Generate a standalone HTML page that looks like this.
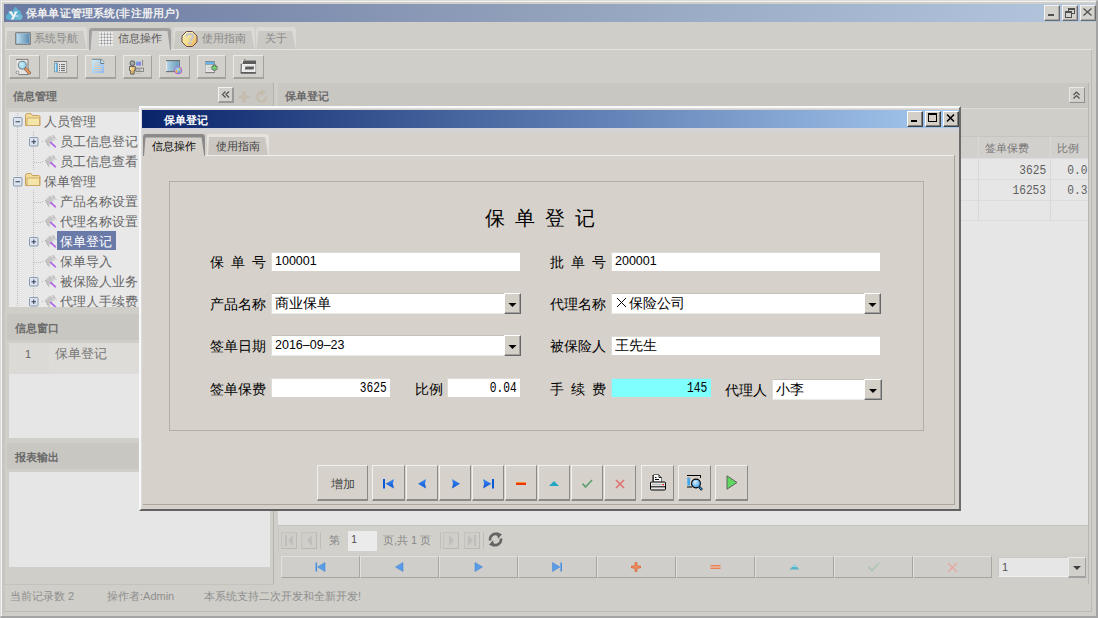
<!DOCTYPE html>
<html><head><meta charset="utf-8">
<style>
*{margin:0;padding:0;box-sizing:border-box}
html,body{width:1098px;height:618px;overflow:hidden}
body{position:relative;background:#d0cec9;font-family:"Liberation Sans",sans-serif;font-size:12px;color:#666}
.a{position:absolute;display:block}
.t{position:absolute;white-space:nowrap;line-height:1}
.lbl{position:absolute;white-space:nowrap;line-height:1;font-size:14px;color:#000}
.mono{font-family:"Liberation Mono",monospace}
</style></head><body>

<div class="a" style="left:0px;top:0px;width:1098px;height:618px;border-top:1px solid #dcdcdc;border-left:1px solid #dcdcdc;border-right:2px solid #a4a4a4;border-bottom:2px solid #a4a4a4"></div>
<div class="a" style="left:1px;top:1px;width:1095px;height:1px;background:#f2f2f2"></div>
<div class="a" style="left:1px;top:1px;width:1px;height:615px;background:#f2f2f2"></div>
<div class="a" style="left:2px;top:22px;width:3px;height:592px;background:#c8c6c0"></div>
<div class="a" style="left:4px;top:4px;width:1092px;height:18px;background:linear-gradient(to right,#6b7aa2,#92a2bc 50%,#b4c7df)"></div>
<svg class="a" style="left:5px;top:6px" width="18" height="15" viewBox="0 0 18 15"><path d="M3.5 13.8 C0.2 13.8 0 8.5 3 8 C3 5 6 4 8 5.2 C8.5 2.5 10 1 10.6 1 C11.5 1 12.5 2.5 12.8 4 C15.5 3.8 16.5 6.5 16 8.2 C18 9 18 13.8 15 13.8 Z" fill="#5eb0d2"/><path d="M9 13.8 C12 12 14 9 16.5 8.6 C18 9.5 17.8 13.8 15 13.8 Z" fill="#80c0d8" opacity="0.6"/><path d="M3.6 5.6 H7 L8.4 9.2 L9.8 5.6 H12.8 L10.2 9.6 H13.6 L13.4 10.4 H10 L8.6 13.4 H5.6 L7.6 10.8 Z" fill="#f4f4f4"/></svg>
<div class="t" style="left:26px;top:8px;font-size:11px;letter-spacing:0.2px;font-weight:bold;color:#eeeeee">保单单证管理系统(非注册用户)</div>
<div class="a" style="left:1044px;top:5px;width:16px;height:16px;background:#d4d2cc;border-top:1px solid #f4f4f4;border-left:1px solid #f4f4f4;border-right:1px solid #6c6c6c;border-bottom:1px solid #6c6c6c;box-shadow:inset -1px -1px 0 #a8a8a8"></div>
<div class="a" style="left:1062px;top:5px;width:16px;height:16px;background:#d4d2cc;border-top:1px solid #f4f4f4;border-left:1px solid #f4f4f4;border-right:1px solid #6c6c6c;border-bottom:1px solid #6c6c6c;box-shadow:inset -1px -1px 0 #a8a8a8"></div>
<div class="a" style="left:1080px;top:5px;width:16px;height:16px;background:#d4d2cc;border-top:1px solid #f4f4f4;border-left:1px solid #f4f4f4;border-right:1px solid #6c6c6c;border-bottom:1px solid #6c6c6c;box-shadow:inset -1px -1px 0 #a8a8a8"></div>
<svg class="a" style="left:1044px;top:5px" width="16" height="16" viewBox="0 0 16 16"><rect x="4" y="9" width="6" height="2" fill="#505050"/></svg>
<svg class="a" style="left:1062px;top:5px" width="16" height="16" viewBox="0 0 16 16"><g fill="#505050"><rect x="6" y="3" width="7" height="2"/><rect x="12" y="5" width="1" height="4"/><rect x="10" y="8" width="3" height="1"/><rect x="6" y="5" width="1" height="1"/><rect x="3" y="6" width="7" height="2"/><rect x="3" y="8" width="1" height="5"/><rect x="9" y="8" width="1" height="5"/><rect x="3" y="12" width="7" height="1"/></g></svg>
<svg class="a" style="left:1080px;top:5px" width="16" height="16" viewBox="0 0 16 16"><path d="M3.5 3.5 L11.5 10.5 M11.5 3.5 L3.5 10.5" stroke="#505050" stroke-width="1.3"/></svg>
<div class="a" style="left:5px;top:27px;width:82px;height:23px;background:#dcdad6;border-radius:3px 3px 0 0"></div>
<div class="a" style="left:5px;top:31px;width:82px;height:18px;background:#cbc9c4;clip-path:polygon(2.5px 0,78px 0,81.5px 18px,0.5px 18px)"></div>
<div class="t" style="left:34px;top:33px;font-size:11px;color:#8a8a8a">系统导航</div>
<div class="a" style="left:173px;top:27px;width:82px;height:23px;background:#dcdad6;border-radius:3px 3px 0 0"></div>
<div class="a" style="left:173px;top:31px;width:82px;height:18px;background:#cbc9c4;clip-path:polygon(2.5px 0,78px 0,81.5px 18px,0.5px 18px)"></div>
<div class="t" style="left:202px;top:33px;font-size:11px;color:#8a8a8a">使用指南</div>
<div class="a" style="left:256px;top:27px;width:40px;height:23px;background:#dcdad6;border-radius:3px 3px 0 0"></div>
<div class="a" style="left:256px;top:31px;width:40px;height:18px;background:#cbc9c4;clip-path:polygon(2.5px 0,36px 0,39.5px 18px,0.5px 18px)"></div>
<div class="t" style="left:265px;top:33px;font-size:11px;color:#8a8a8a">关于</div>
<div class="a" style="left:89px;top:28px;width:82px;height:22px;background:#d4d2ce"></div>
<svg class="a" style="left:89px;top:28px" width="82" height="22" viewBox="0 0 82 22"><path d="M0 22 L0 3 Q0 0 3 0 L79 0 Q82 0 82 3 L82 22 L81 22 L78.5 3 L3 3 L1.5 22 Z" fill="#a0a0a0"/></svg>
<div class="t" style="left:118px;top:33px;font-size:11px;color:#555">信息操作</div>
<svg class="a" style="left:15px;top:32px" width="16" height="13" viewBox="0 0 16 13"><defs><linearGradient id="g1" x1="0" x2="1"><stop offset="0" stop-color="#bfe0f0"/><stop offset="1" stop-color="#5a8ab0"/></linearGradient></defs><rect x="0.5" y="0.5" width="15" height="12" fill="#404040"/><rect x="1.5" y="1.5" width="13" height="10" fill="url(#g1)" stroke="#b0d8f0" stroke-width="0.6"/></svg>
<svg class="a" style="left:99px;top:32px" width="14" height="14" viewBox="0 0 14 14"><rect x="0" y="0" width="14" height="14" fill="#eeeeee"/><rect x="2.0" y="0" width="1" height="14" fill="#c8c8c8"/><rect x="5.0" y="0" width="1" height="14" fill="#c8c8c8"/><rect x="8.0" y="0" width="1" height="14" fill="#c8c8c8"/><rect x="11.0" y="0" width="1" height="14" fill="#c8c8c8"/><rect x="0" y="1.7999999999999998" width="14" height="1" fill="#c8c8c8"/><rect x="0" y="4.9" width="14" height="1" fill="#c8c8c8"/><rect x="0" y="8.0" width="14" height="1" fill="#c8c8c8"/><rect x="0" y="10.9" width="14" height="1" fill="#c8c8c8"/><rect x="1.9" y="1.6999999999999997" width="1.2" height="1.2" fill="#8c8c8c"/><rect x="1.9" y="4.800000000000001" width="1.2" height="1.2" fill="#8c8c8c"/><rect x="1.9" y="7.9" width="1.2" height="1.2" fill="#8c8c8c"/><rect x="1.9" y="10.8" width="1.2" height="1.2" fill="#8c8c8c"/><rect x="4.9" y="1.6999999999999997" width="1.2" height="1.2" fill="#8c8c8c"/><rect x="4.9" y="4.800000000000001" width="1.2" height="1.2" fill="#8c8c8c"/><rect x="4.9" y="7.9" width="1.2" height="1.2" fill="#8c8c8c"/><rect x="4.9" y="10.8" width="1.2" height="1.2" fill="#8c8c8c"/><rect x="7.9" y="1.6999999999999997" width="1.2" height="1.2" fill="#8c8c8c"/><rect x="7.9" y="4.800000000000001" width="1.2" height="1.2" fill="#8c8c8c"/><rect x="7.9" y="7.9" width="1.2" height="1.2" fill="#8c8c8c"/><rect x="7.9" y="10.8" width="1.2" height="1.2" fill="#8c8c8c"/><rect x="10.9" y="1.6999999999999997" width="1.2" height="1.2" fill="#8c8c8c"/><rect x="10.9" y="4.800000000000001" width="1.2" height="1.2" fill="#8c8c8c"/><rect x="10.9" y="7.9" width="1.2" height="1.2" fill="#8c8c8c"/><rect x="10.9" y="10.8" width="1.2" height="1.2" fill="#8c8c8c"/></svg>
<svg class="a" style="left:181px;top:30px" width="18" height="18" viewBox="0 0 18 18"><defs><linearGradient id="oct" x1="0" y1="0" x2="1" y2="1"><stop offset="0" stop-color="#fbf6c8"/><stop offset="0.55" stop-color="#f2dc88"/><stop offset="1" stop-color="#eca850"/></linearGradient></defs><polygon points="5.5,1.5 11.5,1.5 16,6 16,12 11.5,16.5 5.5,16.5 1,12 1,6" fill="url(#oct)" stroke="#6a4a4a" stroke-width="1"/><path d="M5.5 6.5 Q5.5 4 8.5 4 Q12 4 12 6.5 Q12 8.5 9.8 9 V11" fill="none" stroke="#c4c4cc" stroke-width="2.2"/><rect x="7.5" y="12.2" width="3" height="2.2" fill="#c4c4cc"/></svg>
<div class="a" style="left:5px;top:49px;width:84px;height:1px;background:#e6e4e0"></div>
<div class="a" style="left:171px;top:49px;width:921px;height:1px;background:#e6e4e0"></div>
<div class="a" style="left:1091px;top:50px;width:1px;height:562px;background:#bcbab4"></div>
<div class="a" style="left:9px;top:55px;width:31px;height:24px;background:#d2d0cb;border-top:1px solid #eceae6;border-left:1px solid #eceae6;border-right:1px solid #a4a29c;border-bottom:2px solid #a4a29c;"></div>
<div class="a" style="left:47px;top:55px;width:31px;height:24px;background:#d2d0cb;border-top:1px solid #eceae6;border-left:1px solid #eceae6;border-right:1px solid #a4a29c;border-bottom:2px solid #a4a29c;"></div>
<div class="a" style="left:85px;top:55px;width:31px;height:24px;background:#d2d0cb;border-top:1px solid #eceae6;border-left:1px solid #eceae6;border-right:1px solid #a4a29c;border-bottom:2px solid #a4a29c;"></div>
<div class="a" style="left:123px;top:55px;width:29px;height:24px;background:#d2d0cb;border-top:1px solid #eceae6;border-left:1px solid #eceae6;border-right:1px solid #a4a29c;border-bottom:2px solid #a4a29c;"></div>
<div class="a" style="left:159px;top:55px;width:31px;height:24px;background:#d2d0cb;border-top:1px solid #eceae6;border-left:1px solid #eceae6;border-right:1px solid #a4a29c;border-bottom:2px solid #a4a29c;"></div>
<div class="a" style="left:197px;top:55px;width:29px;height:24px;background:#d2d0cb;border-top:1px solid #eceae6;border-left:1px solid #eceae6;border-right:1px solid #a4a29c;border-bottom:2px solid #a4a29c;"></div>
<div class="a" style="left:233px;top:55px;width:31px;height:24px;background:#d2d0cb;border-top:1px solid #eceae6;border-left:1px solid #eceae6;border-right:1px solid #a4a29c;border-bottom:2px solid #a4a29c;"></div>
<svg class="a" style="left:12px;top:56px" width="24" height="22" viewBox="0 0 24 22"><rect x="4.5" y="3.5" width="11.5" height="15" fill="#e4e4e2"/><path d="M4 3.4 H16 V18.6 H6.5" fill="none" stroke="#727272" stroke-width="0.9"/><circle cx="5.5" cy="16.3" r="1.3" fill="#fafafa" stroke="#727272" stroke-width="0.8"/><defs><radialGradient id="lg1" cx="0.4" cy="0.4" r="0.7"><stop offset="0" stop-color="#c8f0f4"/><stop offset="1" stop-color="#88c8f0"/></radialGradient></defs><circle cx="10.3" cy="9.3" r="4" fill="url(#lg1)" stroke="#6e6e6e" stroke-width="0.9"/><path d="M13.6 12.8 L17.4 16.9" stroke="#606060" stroke-width="3.2" stroke-linecap="round"/><path d="M13.6 12.8 L17.4 16.9" stroke="#f08a50" stroke-width="2.2" stroke-linecap="round"/><path d="M14.2 13.6 L16.6 16.2" stroke="#f8d080" stroke-width="0.7" stroke-dasharray="0.8 0.8"/></svg>
<svg class="a" style="left:50px;top:56px" width="24" height="22" viewBox="0 0 24 22"><rect x="4.3" y="5.5" width="12.5" height="11" fill="#e6e6e6"/><rect x="4" y="5" width="13" height="0.9" fill="#6e6e6e"/><rect x="16.3" y="5" width="0.8" height="11.6" fill="#8a8a8a"/><rect x="7.8" y="16" width="9.3" height="0.7" fill="#8a8a8a"/><rect x="4.3" y="7" width="3.4" height="9" fill="#60b8ec" stroke="#8a8a8a" stroke-width="0.6"/><rect x="5" y="7.6" width="1" height="7.8" fill="#b8e4f8"/><g fill="#5c5c5c"><rect x="9" y="8.1" width="1" height="1"/><rect x="11" y="8.2" width="4" height="0.9"/><rect x="9" y="10.1" width="1" height="1"/><rect x="11" y="10.2" width="4" height="0.9"/><rect x="9" y="12.1" width="1" height="1"/><rect x="11" y="12.2" width="4" height="0.9"/><rect x="9" y="14.1" width="1" height="1"/><rect x="11" y="14.2" width="4" height="0.9"/></g></svg>
<svg class="a" style="left:88px;top:56px" width="24" height="22" viewBox="0 0 24 22"><defs><linearGradient id="dg3" x1="0" y1="0" x2="1" y2="1"><stop offset="0" stop-color="#c8eef8"/><stop offset="1" stop-color="#90b8f0"/></linearGradient></defs><path d="M4 3.3 H13.7 L16 5.8 V17 H4 Z" fill="url(#dg3)"/><path d="M4 3.3 H13.6" stroke="#767676" stroke-width="0.9"/><path d="M13.6 3.3 L16.2 6" stroke="#808080" stroke-width="0.8"/><path d="M12.8 3.5 V7.4 H16.2" fill="none" stroke="#6e6e6e" stroke-width="1"/><path d="M13.4 4 L15.8 6.8 H13.4 Z" fill="#d0f4fa"/><g fill="#e2cdb4"><rect x="6" y="6" width="4.8" height="0.9"/><rect x="6" y="8" width="4.8" height="0.9"/><rect x="6" y="10.1" width="7.8" height="0.9"/><rect x="6" y="12.1" width="7.8" height="0.9"/><rect x="6" y="14.1" width="7.8" height="0.9"/></g></svg>
<svg class="a" style="left:125px;top:56px" width="24" height="22" viewBox="0 0 24 22"><rect x="10.5" y="4.2" width="6" height="5.6" fill="#d4d4d4"/><rect x="11" y="5.6" width="5" height="4" fill="#8888e8"/><circle cx="11.6" cy="6.3" r="0.9" fill="#40e0e0"/><rect x="17.2" y="4" width="0.9" height="5.8" fill="#808080"/><rect x="11" y="12.2" width="7.5" height="3.2" fill="#e6e6e6" stroke="#7a7a7a" stroke-width="0.9"/><rect x="12" y="13.6" width="4.5" height="0.8" fill="#6a6a6a"/><rect x="10.5" y="17.3" width="6" height="0.6" fill="#b0b0b0"/><circle cx="7.4" cy="7.2" r="2.4" fill="#a8a8a8" stroke="#505050" stroke-width="0.9"/><path d="M4.6 10.4 H10.2 V14.6 H9.1 V18.1 H5.7 V14.6 H4.6 Z" fill="#f0c878" stroke="#505050" stroke-width="0.9"/><path d="M7.4 14.6 V18" stroke="#c09040" stroke-width="0.6"/><rect x="5.2" y="11" width="1.2" height="3" fill="#fae8c0"/></svg>
<svg class="a" style="left:162px;top:56px" width="24" height="22" viewBox="0 0 24 22"><defs><linearGradient id="mg5" x1="0" x2="1"><stop offset="0" stop-color="#b0d4e8"/><stop offset="1" stop-color="#6a9ab8"/></linearGradient><radialGradient id="gl5" cx="0.4" cy="0.4" r="0.7"><stop offset="0" stop-color="#b0d8f0"/><stop offset="1" stop-color="#5a9ad0"/></radialGradient></defs><rect x="4.2" y="4.6" width="13.4" height="10.8" fill="url(#mg5)"/><rect x="4.2" y="5.2" width="0.9" height="10.2" fill="#f0f0f0"/><rect x="16.6" y="5" width="0.9" height="10.5" fill="#90d0f8"/><rect x="4" y="4.2" width="13.8" height="0.9" fill="#5e5e5e"/><rect x="4" y="15.2" width="13.8" height="0.9" fill="#5e5e5e"/><rect x="17.2" y="4.2" width="0.7" height="11.8" fill="#5e5e5e"/><circle cx="16.2" cy="14.3" r="3.9" fill="#d050d8"/><circle cx="16.2" cy="14.3" r="3.2" fill="url(#gl5)"/><path d="M13.4 15.5 Q14.5 12.5 15.4 14.8 Q15.6 17 14.3 17.2 Z" fill="#f0b040"/><path d="M16.8 11.5 Q19 12 18.6 14.3 Q17.4 14.8 17 13 Z" fill="#e8c840"/><path d="M17.6 15.2 Q19 15.5 18.2 16.8 Z" fill="#80c850"/></svg>
<svg class="a" style="left:199px;top:56px" width="24" height="22" viewBox="0 0 24 22"><rect x="6" y="5" width="9.8" height="11.8" fill="#e4e4e4"/><rect x="6" y="5" width="9.8" height="0.9" fill="#7a7a7a"/><rect x="6" y="5.9" width="9.8" height="2.6" fill="#62b4ea"/><rect x="6" y="8.5" width="9.8" height="0.6" fill="#8a8a8a"/><rect x="6" y="16.2" width="9.8" height="0.9" fill="#6a6a6a"/><rect x="15.2" y="5" width="0.8" height="12" fill="#8a8a8a"/><rect x="6" y="5" width="0.6" height="12" fill="#a0a0a0"/><rect x="8.5" y="11" width="5" height="0.8" fill="#a8c8a8"/><rect x="8.5" y="13" width="5" height="0.8" fill="#c8c8c8"/><path d="M15.5 8.8 V14.6 M12.6 11.7 H18.4" stroke="#5a5a5a" stroke-width="3.4"/><path d="M15.5 9.4 V14 M13.2 11.7 H17.8" stroke="#70d870" stroke-width="2"/></svg>
<svg class="a" style="left:236px;top:56px" width="24" height="22" viewBox="0 0 24 22"><path d="M6 4.5 H20 V17.5 H5 L5.3 8 Z" fill="#f0f0f0"/><path d="M7.4 4.4 H20 V8 H6.4 Z" fill="#5c5c5c"/><path d="M5 8.4 L5.8 7.5" stroke="#707070" stroke-width="0.8"/><rect x="8.4" y="3.2" width="0.9" height="0.9" fill="#404040"/><path d="M5.4 8 L5 17.3" stroke="#707070" stroke-width="1.2"/><path d="M9.4 10.6 H18.2 L17.6 13.4 H8.8 Z" fill="#5c5c5c"/><rect x="5" y="16" width="15" height="1.8" fill="#5c5c5c"/><rect x="19.3" y="8" width="0.8" height="8.5" fill="#9a9a9a"/><path d="M7 9.5 H19 M7 14.8 H19" stroke="#c8c8c8" stroke-width="0.5" stroke-dasharray="1 1"/></svg>
<div class="a" style="left:6px;top:83px;width:267px;height:25px;background:#c9c7c2"></div>
<div class="t" style="left:13px;top:91px;font-size:11px;font-weight:bold;color:#6a6a6a">信息管理</div>
<div class="a" style="left:273px;top:83px;width:1px;height:501px;background:#b4b2ac"></div>
<div class="a" style="left:218px;top:87px;width:16px;height:16px;background:#d2d0cb;border-top:1px solid #eceae6;border-left:1px solid #eceae6;border-right:1px solid #a4a29c;border-bottom:2px solid #a4a29c;border-bottom-width:2px;border-right-width:2px;border-top-color:#f2f2f0;border-left-color:#f2f2f0;border-right-color:#9a9a9a;border-bottom-color:#9a9a9a"></div>
<svg class="a" style="left:218px;top:87px" width="16" height="16" viewBox="0 0 16 16"><path d="M7.5 4.5 L4.5 7.5 L7.5 10.5 M11 4.5 L8 7.5 L11 10.5" stroke="#505050" fill="none" stroke-width="1.2"/></svg>
<svg class="a" style="left:237px;top:90px" width="14" height="14" viewBox="0 0 14 14"><path d="M7 1.5 V12.5 M1.5 7 H12.5" stroke="#c4bcad" stroke-width="3"/></svg>
<svg class="a" style="left:255px;top:89px" width="14" height="15" viewBox="0 0 14 15"><path d="M11.2 7.6 A4.6 4.6 0 1 1 7.2 3.6" stroke="#c4bcad" stroke-width="2.6" fill="none"/><path d="M6 0 L11.5 3.4 L6 6.8 Z" fill="#c4bcad"/></svg>
<div class="a" style="left:9px;top:112px;width:264px;height:195px;background:#e8e8e8"></div>
<svg class="a" style="left:17px;top:113px" width="1" height="194"><line x1="0.5" y1="0" x2="0.5" y2="194" stroke="#bdbdbd" stroke-dasharray="1 1"/></svg>
<svg class="a" style="left:33px;top:131px" width="1" height="39"><line x1="0.5" y1="0" x2="0.5" y2="39" stroke="#bdbdbd" stroke-dasharray="1 1"/></svg>
<svg class="a" style="left:33px;top:190px" width="1" height="117"><line x1="0.5" y1="0" x2="0.5" y2="117" stroke="#bdbdbd" stroke-dasharray="1 1"/></svg>
<svg class="a" style="left:13px;top:117px" width="10" height="10" viewBox="0 0 10 10"><rect x="0.5" y="0.5" width="8.5" height="8.5" rx="1" fill="#dde3ec" stroke="#8a9ab2" stroke-width="1"/><path d="M2.5 4.75 H7" stroke="#3a4a66" stroke-width="1.1"/></svg>
<svg class="a" style="left:25px;top:113px" width="16" height="14" viewBox="0 0 16 14"><path d="M0.5 2.5 Q0.5 0.5 2.5 0.5 H6 L7.5 2.5 H13.5 Q15 2.5 15 4 V12.5 H0.5 Z" fill="#f0dc98" stroke="#c8a060" stroke-width="1"/><path d="M2 5 H14.5 V12.5 H2 Z" fill="#f4e6a8" stroke="#c8a060" stroke-width="0.8"/></svg>
<div class="t" style="left:44px;top:115px;font-size:13px;color:#666">人员管理</div>
<svg class="a" style="left:29px;top:137px" width="10" height="10" viewBox="0 0 10 10"><rect x="0.5" y="0.5" width="8.5" height="8.5" rx="1" fill="#dde3ec" stroke="#8a9ab2" stroke-width="1"/><path d="M2.5 4.75 H7" stroke="#3a4a66" stroke-width="1.1"/><path d="M4.75 2.5 V7" stroke="#3a4a66" stroke-width="1.1"/></svg>
<svg class="a" style="left:42px;top:134px" width="15" height="15" viewBox="0 0 15 15"><path d="M3 6.5 L7.5 1.5 L10 2.5 L12 1 L13.5 4.5 L10.5 8.5 L6.5 13 Z" fill="#d2d2d2"/><path d="M4 6 L8 2.5 L11 4 L8.5 8 L6 11 Z" fill="#c4c4c4"/><path d="M0.5 7.5 L1 7.5 M3.5 6.5 L7 12.5 M11 1.5 L14 5.5" stroke="#8a8a8a" stroke-width="1" stroke-dasharray="1 1.2" fill="none"/><path d="M8.8 8.6 L13.4 12.8" stroke="#b060e8" stroke-width="1.6" stroke-linecap="round"/></svg>
<div class="t" style="left:60px;top:135px;font-size:13px;color:#666">员工信息登记</div>
<svg class="a" style="left:34px;top:162px" width="7" height="1"><line x1="0" y1="0.5" x2="7" y2="0.5" stroke="#bdbdbd" stroke-dasharray="1 1"/></svg>
<svg class="a" style="left:42px;top:154px" width="15" height="15" viewBox="0 0 15 15"><path d="M3 6.5 L7.5 1.5 L10 2.5 L12 1 L13.5 4.5 L10.5 8.5 L6.5 13 Z" fill="#d2d2d2"/><path d="M4 6 L8 2.5 L11 4 L8.5 8 L6 11 Z" fill="#c4c4c4"/><path d="M0.5 7.5 L1 7.5 M3.5 6.5 L7 12.5 M11 1.5 L14 5.5" stroke="#8a8a8a" stroke-width="1" stroke-dasharray="1 1.2" fill="none"/><path d="M8.8 8.6 L13.4 12.8" stroke="#b060e8" stroke-width="1.6" stroke-linecap="round"/></svg>
<div class="t" style="left:60px;top:155px;font-size:13px;color:#666">员工信息查看</div>
<svg class="a" style="left:13px;top:177px" width="10" height="10" viewBox="0 0 10 10"><rect x="0.5" y="0.5" width="8.5" height="8.5" rx="1" fill="#dde3ec" stroke="#8a9ab2" stroke-width="1"/><path d="M2.5 4.75 H7" stroke="#3a4a66" stroke-width="1.1"/></svg>
<svg class="a" style="left:25px;top:173px" width="16" height="14" viewBox="0 0 16 14"><path d="M0.5 2.5 Q0.5 0.5 2.5 0.5 H6 L7.5 2.5 H13.5 Q15 2.5 15 4 V12.5 H0.5 Z" fill="#f0dc98" stroke="#c8a060" stroke-width="1"/><path d="M2 5 H14.5 V12.5 H2 Z" fill="#f4e6a8" stroke="#c8a060" stroke-width="0.8"/></svg>
<div class="t" style="left:44px;top:175px;font-size:13px;color:#666">保单管理</div>
<svg class="a" style="left:34px;top:202px" width="7" height="1"><line x1="0" y1="0.5" x2="7" y2="0.5" stroke="#bdbdbd" stroke-dasharray="1 1"/></svg>
<svg class="a" style="left:42px;top:194px" width="15" height="15" viewBox="0 0 15 15"><path d="M3 6.5 L7.5 1.5 L10 2.5 L12 1 L13.5 4.5 L10.5 8.5 L6.5 13 Z" fill="#d2d2d2"/><path d="M4 6 L8 2.5 L11 4 L8.5 8 L6 11 Z" fill="#c4c4c4"/><path d="M0.5 7.5 L1 7.5 M3.5 6.5 L7 12.5 M11 1.5 L14 5.5" stroke="#8a8a8a" stroke-width="1" stroke-dasharray="1 1.2" fill="none"/><path d="M8.8 8.6 L13.4 12.8" stroke="#b060e8" stroke-width="1.6" stroke-linecap="round"/></svg>
<div class="t" style="left:60px;top:195px;font-size:13px;color:#666">产品名称设置</div>
<svg class="a" style="left:34px;top:222px" width="7" height="1"><line x1="0" y1="0.5" x2="7" y2="0.5" stroke="#bdbdbd" stroke-dasharray="1 1"/></svg>
<svg class="a" style="left:42px;top:214px" width="15" height="15" viewBox="0 0 15 15"><path d="M3 6.5 L7.5 1.5 L10 2.5 L12 1 L13.5 4.5 L10.5 8.5 L6.5 13 Z" fill="#d2d2d2"/><path d="M4 6 L8 2.5 L11 4 L8.5 8 L6 11 Z" fill="#c4c4c4"/><path d="M0.5 7.5 L1 7.5 M3.5 6.5 L7 12.5 M11 1.5 L14 5.5" stroke="#8a8a8a" stroke-width="1" stroke-dasharray="1 1.2" fill="none"/><path d="M8.8 8.6 L13.4 12.8" stroke="#b060e8" stroke-width="1.6" stroke-linecap="round"/></svg>
<div class="t" style="left:60px;top:215px;font-size:13px;color:#666">代理名称设置</div>
<svg class="a" style="left:29px;top:237px" width="10" height="10" viewBox="0 0 10 10"><rect x="0.5" y="0.5" width="8.5" height="8.5" rx="1" fill="#dde3ec" stroke="#8a9ab2" stroke-width="1"/><path d="M2.5 4.75 H7" stroke="#3a4a66" stroke-width="1.1"/><path d="M4.75 2.5 V7" stroke="#3a4a66" stroke-width="1.1"/></svg>
<svg class="a" style="left:42px;top:234px" width="15" height="15" viewBox="0 0 15 15"><path d="M3 6.5 L7.5 1.5 L10 2.5 L12 1 L13.5 4.5 L10.5 8.5 L6.5 13 Z" fill="#d2d2d2"/><path d="M4 6 L8 2.5 L11 4 L8.5 8 L6 11 Z" fill="#c4c4c4"/><path d="M0.5 7.5 L1 7.5 M3.5 6.5 L7 12.5 M11 1.5 L14 5.5" stroke="#8a8a8a" stroke-width="1" stroke-dasharray="1 1.2" fill="none"/><path d="M8.8 8.6 L13.4 12.8" stroke="#b060e8" stroke-width="1.6" stroke-linecap="round"/></svg>
<div class="a" style="left:57px;top:231px;width:59px;height:19px;background:#6a7aa8"></div>
<div class="t" style="left:60px;top:235px;font-size:13px;color:#fff">保单登记</div>
<svg class="a" style="left:34px;top:262px" width="7" height="1"><line x1="0" y1="0.5" x2="7" y2="0.5" stroke="#bdbdbd" stroke-dasharray="1 1"/></svg>
<svg class="a" style="left:42px;top:254px" width="15" height="15" viewBox="0 0 15 15"><path d="M3 6.5 L7.5 1.5 L10 2.5 L12 1 L13.5 4.5 L10.5 8.5 L6.5 13 Z" fill="#d2d2d2"/><path d="M4 6 L8 2.5 L11 4 L8.5 8 L6 11 Z" fill="#c4c4c4"/><path d="M0.5 7.5 L1 7.5 M3.5 6.5 L7 12.5 M11 1.5 L14 5.5" stroke="#8a8a8a" stroke-width="1" stroke-dasharray="1 1.2" fill="none"/><path d="M8.8 8.6 L13.4 12.8" stroke="#b060e8" stroke-width="1.6" stroke-linecap="round"/></svg>
<div class="t" style="left:60px;top:255px;font-size:13px;color:#666">保单导入</div>
<svg class="a" style="left:29px;top:277px" width="10" height="10" viewBox="0 0 10 10"><rect x="0.5" y="0.5" width="8.5" height="8.5" rx="1" fill="#dde3ec" stroke="#8a9ab2" stroke-width="1"/><path d="M2.5 4.75 H7" stroke="#3a4a66" stroke-width="1.1"/><path d="M4.75 2.5 V7" stroke="#3a4a66" stroke-width="1.1"/></svg>
<svg class="a" style="left:42px;top:274px" width="15" height="15" viewBox="0 0 15 15"><path d="M3 6.5 L7.5 1.5 L10 2.5 L12 1 L13.5 4.5 L10.5 8.5 L6.5 13 Z" fill="#d2d2d2"/><path d="M4 6 L8 2.5 L11 4 L8.5 8 L6 11 Z" fill="#c4c4c4"/><path d="M0.5 7.5 L1 7.5 M3.5 6.5 L7 12.5 M11 1.5 L14 5.5" stroke="#8a8a8a" stroke-width="1" stroke-dasharray="1 1.2" fill="none"/><path d="M8.8 8.6 L13.4 12.8" stroke="#b060e8" stroke-width="1.6" stroke-linecap="round"/></svg>
<div class="t" style="left:60px;top:275px;font-size:13px;color:#666">被保险人业务</div>
<svg class="a" style="left:29px;top:297px" width="10" height="10" viewBox="0 0 10 10"><rect x="0.5" y="0.5" width="8.5" height="8.5" rx="1" fill="#dde3ec" stroke="#8a9ab2" stroke-width="1"/><path d="M2.5 4.75 H7" stroke="#3a4a66" stroke-width="1.1"/><path d="M4.75 2.5 V7" stroke="#3a4a66" stroke-width="1.1"/></svg>
<svg class="a" style="left:42px;top:294px" width="15" height="15" viewBox="0 0 15 15"><path d="M3 6.5 L7.5 1.5 L10 2.5 L12 1 L13.5 4.5 L10.5 8.5 L6.5 13 Z" fill="#d2d2d2"/><path d="M4 6 L8 2.5 L11 4 L8.5 8 L6 11 Z" fill="#c4c4c4"/><path d="M0.5 7.5 L1 7.5 M3.5 6.5 L7 12.5 M11 1.5 L14 5.5" stroke="#8a8a8a" stroke-width="1" stroke-dasharray="1 1.2" fill="none"/><path d="M8.8 8.6 L13.4 12.8" stroke="#b060e8" stroke-width="1.6" stroke-linecap="round"/></svg>
<div class="t" style="left:60px;top:295px;font-size:13px;color:#666">代理人手续费</div>
<div class="a" style="left:6px;top:307px;width:267px;height:7px;background:#d0cec9"></div>
<div class="a" style="left:7px;top:314px;width:266px;height:26px;background:#c9c7c2"></div>
<div class="t" style="left:15px;top:323px;font-size:11px;font-weight:bold;color:#6a6a6a">信息窗口</div>
<div class="a" style="left:9px;top:343px;width:264px;height:95px;background:#e6e6e6"></div>
<div class="a" style="left:9px;top:343px;width:40px;height:31px;background:#dcdad6"></div>
<div class="a" style="left:49px;top:343px;width:224px;height:31px;background:#dedcd8"></div>
<div class="t" style="left:25px;top:349px;font-size:11px;color:#666">1</div>
<div class="t" style="left:55px;top:347px;font-size:13px;color:#777">保单登记</div>
<div class="a" style="left:7px;top:443px;width:266px;height:26px;background:#c9c7c2"></div>
<div class="t" style="left:15px;top:452px;font-size:11px;font-weight:bold;color:#6a6a6a">报表输出</div>
<div class="a" style="left:9px;top:472px;width:261px;height:95px;background:#e6e6e6"></div>
<div class="a" style="left:278px;top:83px;width:811px;height:25px;background:#c9c7c2"></div>
<div class="t" style="left:285px;top:91px;font-size:11px;font-weight:bold;color:#6a6a6a">保单登记</div>
<div class="a" style="left:1069px;top:87px;width:16px;height:16px;background:#d2d0cb;border-top:1px solid #eceae6;border-left:1px solid #eceae6;border-right:1px solid #a4a29c;border-bottom:2px solid #a4a29c;border-bottom-width:1px;border-right-color:#909090;border-bottom-color:#909090"></div>
<svg class="a" style="left:1069px;top:87px" width="16" height="16" viewBox="0 0 16 16"><path d="M4.5 8 L7.5 5 L10.5 8 M4.5 11.5 L7.5 8.5 L10.5 11.5" stroke="#505050" fill="none" stroke-width="1.2"/></svg>
<div class="a" style="left:1088px;top:83px;width:1px;height:501px;background:#b8b6b0"></div>
<div class="a" style="left:278px;top:108px;width:810px;height:1px;background:#dcdad6"></div>
<div class="a" style="left:278px;top:136px;width:810px;height:390px;background:#e6e6e6"></div>
<div class="a" style="left:278px;top:136px;width:810px;height:22px;background:#d2d0cc;border-top:1px solid #c6c4c0"></div>
<div class="t" style="left:985px;top:143px;font-size:11px;color:#777">签单保费</div>
<div class="t" style="left:1057px;top:143px;font-size:11px;color:#777">比例</div>
<div class="a" style="left:978px;top:136px;width:1px;height:84px;background:#dad8d4"></div>
<div class="a" style="left:1050px;top:136px;width:1px;height:84px;background:#dad8d4"></div>
<div class="a" style="left:278px;top:158px;width:810px;height:1px;background:#dcdcdc"></div>
<div class="a" style="left:278px;top:179px;width:810px;height:1px;background:#dcdcdc"></div>
<div class="a" style="left:278px;top:200px;width:810px;height:1px;background:#dcdcdc"></div>
<div class="a" style="left:278px;top:220px;width:810px;height:1px;background:#dcdcdc"></div>
<div class="t" style="right:52px;top:164px;font-family:'Liberation Mono',monospace;font-size:13px;color:#606060;transform:scaleX(0.86);transform-origin:100% 0">3625</div>
<div class="t" style="right:11px;top:164px;font-family:'Liberation Mono',monospace;font-size:13px;color:#606060;transform:scaleX(0.86);transform-origin:100% 0">0.0</div>
<div class="t" style="right:52px;top:184px;font-family:'Liberation Mono',monospace;font-size:13px;color:#606060;transform:scaleX(0.86);transform-origin:100% 0">16253</div>
<div class="t" style="right:11px;top:184px;font-family:'Liberation Mono',monospace;font-size:13px;color:#606060;transform:scaleX(0.86);transform-origin:100% 0">0.3</div>
<div class="a" style="left:278px;top:525px;width:810px;height:28px;background:#d2d0cb;border-top:1px solid #c6c4be;border-left:1px solid #c6c4be"></div>
<div class="a" style="left:281px;top:532px;width:16px;height:17px;border:1px solid #c4c2bc;border-right-color:#bcbab4;border-bottom-color:#bcbab4;background:#d0cec9"></div>
<div class="a" style="left:301px;top:532px;width:16px;height:17px;border:1px solid #c4c2bc;border-right-color:#bcbab4;border-bottom-color:#bcbab4;background:#d0cec9"></div>
<div class="a" style="left:443px;top:532px;width:16px;height:17px;border:1px solid #c4c2bc;border-right-color:#bcbab4;border-bottom-color:#bcbab4;background:#d0cec9"></div>
<div class="a" style="left:464px;top:532px;width:16px;height:17px;border:1px solid #c4c2bc;border-right-color:#bcbab4;border-bottom-color:#bcbab4;background:#d0cec9"></div>
<svg class="a" style="left:281px;top:532px" width="16" height="17" viewBox="0 0 16 17"><rect x="4" y="3" width="2" height="11" fill="#c0bebb"/><path d="M12 3 L7 8.5 L12 14 Z" fill="#c0bebb"/></svg>
<svg class="a" style="left:301px;top:532px" width="16" height="17" viewBox="0 0 16 17"><path d="M11 3 L6 8.5 L11 14 Z" fill="#c0bebb"/></svg>
<svg class="a" style="left:443px;top:532px" width="16" height="17" viewBox="0 0 16 17"><path d="M6 3 L11 8.5 L6 14 Z" fill="#c0bebb"/></svg>
<svg class="a" style="left:464px;top:532px" width="16" height="17" viewBox="0 0 16 17"><rect x="10" y="3" width="2" height="11" fill="#c0bebb"/><path d="M4 3 L9 8.5 L4 14 Z" fill="#c0bebb"/></svg>
<div class="a" style="left:320px;top:532px;width:1px;height:17px;background:#c0beb8"></div>
<div class="a" style="left:440px;top:532px;width:1px;height:17px;background:#c0beb8"></div>
<div class="a" style="left:483px;top:532px;width:1px;height:17px;background:#c0beb8"></div>
<div class="t" style="left:329px;top:535px;font-size:11px;color:#888">第</div>
<div class="a" style="left:348px;top:531px;width:29px;height:20px;background:#ebebeb"></div>
<div class="t" style="left:351px;top:534px;font-size:11px;color:#555">1</div>
<div class="t" style="left:383px;top:535px;font-size:11px;color:#888">页,共 1 页</div>
<svg class="a" style="left:488px;top:532px" width="15" height="15" viewBox="0 0 15 15"><path d="M2.2 8.5 A5.3 5.3 0 0 1 10.5 3" stroke="#646464" stroke-width="2.6" fill="none"/><path d="M8.5 0 L14 2.2 L10 6.8 Z" fill="#646464"/><path d="M12.8 6.5 A5.3 5.3 0 0 1 4.5 12" stroke="#646464" stroke-width="2.6" fill="none"/><path d="M6.5 15 L1 12.8 L5 8.2 Z" fill="#646464"/></svg>
<div class="a" style="left:281px;top:556px;width:79px;height:22px;background:#d0ceca;border-top:1px solid #e2e0dc;border-left:1px solid #e2e0dc;border-right:1px solid #a8a6a0;border-bottom:2px solid #a8a6a0;border-bottom-width:1px"></div>
<div class="a" style="left:360px;top:556px;width:79px;height:22px;background:#d0ceca;border-top:1px solid #e2e0dc;border-left:1px solid #e2e0dc;border-right:1px solid #a8a6a0;border-bottom:2px solid #a8a6a0;border-bottom-width:1px"></div>
<div class="a" style="left:439px;top:556px;width:79px;height:22px;background:#d0ceca;border-top:1px solid #e2e0dc;border-left:1px solid #e2e0dc;border-right:1px solid #a8a6a0;border-bottom:2px solid #a8a6a0;border-bottom-width:1px"></div>
<div class="a" style="left:518px;top:556px;width:79px;height:22px;background:#d0ceca;border-top:1px solid #e2e0dc;border-left:1px solid #e2e0dc;border-right:1px solid #a8a6a0;border-bottom:2px solid #a8a6a0;border-bottom-width:1px"></div>
<div class="a" style="left:597px;top:556px;width:79px;height:22px;background:#d0ceca;border-top:1px solid #e2e0dc;border-left:1px solid #e2e0dc;border-right:1px solid #a8a6a0;border-bottom:2px solid #a8a6a0;border-bottom-width:1px"></div>
<div class="a" style="left:676px;top:556px;width:79px;height:22px;background:#d0ceca;border-top:1px solid #e2e0dc;border-left:1px solid #e2e0dc;border-right:1px solid #a8a6a0;border-bottom:2px solid #a8a6a0;border-bottom-width:1px"></div>
<div class="a" style="left:755px;top:556px;width:79px;height:22px;background:#d0ceca;border-top:1px solid #e2e0dc;border-left:1px solid #e2e0dc;border-right:1px solid #a8a6a0;border-bottom:2px solid #a8a6a0;border-bottom-width:1px"></div>
<div class="a" style="left:834px;top:556px;width:79px;height:22px;background:#d0ceca;border-top:1px solid #e2e0dc;border-left:1px solid #e2e0dc;border-right:1px solid #a8a6a0;border-bottom:2px solid #a8a6a0;border-bottom-width:1px"></div>
<div class="a" style="left:913px;top:556px;width:79px;height:22px;background:#d0ceca;border-top:1px solid #e2e0dc;border-left:1px solid #e2e0dc;border-right:1px solid #a8a6a0;border-bottom:2px solid #a8a6a0;border-bottom-width:1px"></div>
<svg class="a" style="left:315px;top:562px" width="12" height="11" viewBox="0 0 12 11"><rect x="0.5" y="0.5" width="1.6" height="9" fill="#4a90e0"/><path d="M10 0.5 L2.6 5 L10 9.5 Z" fill="#5a9ce8" stroke="#3a80d0" stroke-width="0.5"/></svg>
<svg class="a" style="left:394px;top:562px" width="12" height="11" viewBox="0 0 12 11"><path d="M9 0.5 L1.5 5 L9 9.5 Z" fill="#5a9ce8" stroke="#3a80d0" stroke-width="0.5"/></svg>
<svg class="a" style="left:473px;top:562px" width="12" height="11" viewBox="0 0 12 11"><path d="M2 0.5 L9.5 5 L2 9.5 Z" fill="#5a9ce8" stroke="#3a80d0" stroke-width="0.5"/></svg>
<svg class="a" style="left:552px;top:562px" width="12" height="11" viewBox="0 0 12 11"><path d="M0.5 0.5 L7.9 5 L0.5 9.5 Z" fill="#5a9ce8" stroke="#3a80d0" stroke-width="0.5"/><rect x="8.4" y="0.5" width="1.6" height="9" fill="#4a90e0"/></svg>
<svg class="a" style="left:631px;top:562px" width="12" height="11" viewBox="0 0 12 11"><path d="M4 0.5 H6 V4 H9.5 V6 H6 V9.5 H4 V6 H0.5 V4 H4 Z" fill="#f09060" stroke="#d86838" stroke-width="0.8"/></svg>
<svg class="a" style="left:710px;top:562px" width="12" height="11" viewBox="0 0 12 11"><rect x="0.5" y="3" width="10" height="1.6" fill="#e88050"/><rect x="0.5" y="5.4" width="10" height="1.6" fill="#e88050"/><rect x="0.5" y="4.6" width="10" height="0.8" fill="#f4c0a0"/></svg>
<svg class="a" style="left:789px;top:562px" width="12" height="11" viewBox="0 0 12 11"><path d="M0.5 7.5 L5.5 2.5 L10.5 7.5 Z" fill="#58b4c8"/><path d="M3 5 L5.5 2.5 L8 5 Z" fill="#90d8e8"/></svg>
<svg class="a" style="left:868px;top:562px" width="12" height="11" viewBox="0 0 12 11"><path d="M0.5 5 L4 8.5 L11 1" stroke="#a8c8b0" stroke-width="1.6" fill="none"/></svg>
<svg class="a" style="left:947px;top:562px" width="12" height="11" viewBox="0 0 12 11"><path d="M1 1 L10 10 M10 1 L1 10" stroke="#e8a8a0" stroke-width="1.4"/></svg>
<div class="a" style="left:998px;top:557px;width:70px;height:20px;background:#e6e6e6;border-top:1px solid #c8c8c8;border-left:1px solid #c8c8c8;border-bottom:1px solid #f0f0f0"></div>
<div class="t" style="left:1002px;top:562px;font-size:11px;color:#555">1</div>
<div class="a" style="left:1068px;top:557px;width:18px;height:21px;background:#d2d0cb;border-top:1px solid #eceae6;border-left:1px solid #eceae6;border-right:1px solid #a4a29c;border-bottom:2px solid #a4a29c;border-bottom-width:2px;border-right-color:#a0a0a0;border-bottom-color:#a0a0a0"></div>
<svg class="a" style="left:1068px;top:557px" width="18" height="21" viewBox="0 0 18 21"><path d="M5 9 L13 9 L9 13 Z" fill="#404040"/></svg>
<div class="a" style="left:5px;top:584px;width:269px;height:1px;background:#c4c2bc"></div>
<div class="a" style="left:5px;top:611px;width:1087px;height:1px;background:#bcbab4"></div>
<div class="t" style="left:10px;top:591px;font-size:11px;color:#8e8e8e">当前记录数 2</div>
<div class="t" style="left:107px;top:591px;font-size:11px;color:#8e8e8e">操作者:Admin</div>
<div class="t" style="left:204px;top:591px;font-size:11px;color:#8e8e8e">本系统支持二次开发和全新开发!</div>
<div class="a" style="left:139px;top:106px;width:822px;height:405px;background:#d6d2cb;border-top:2px solid #f8f8f8;border-left:2px solid #f8f8f8;border-right:2px solid #6c6c6c;border-bottom:2px solid #626262;box-shadow:inset 1px 1px 0 #dcdcdc"></div>
<div class="a" style="left:142px;top:110px;width:817px;height:18px;background:linear-gradient(to right,#0a246a,#a6caf0)"></div>
<div class="t" style="left:164px;top:115px;font-weight:bold;color:#fff;font-size:11px">保单登记</div>
<div class="a" style="left:907px;top:111px;width:16px;height:16px;background:#d4d0c8;border-top:1px solid #fff;border-left:1px solid #fff;border-right:1px solid #404040;border-bottom:1px solid #404040;box-shadow:inset -1px -1px 0 #808080"></div>
<div class="a" style="left:925px;top:111px;width:16px;height:16px;background:#d4d0c8;border-top:1px solid #fff;border-left:1px solid #fff;border-right:1px solid #404040;border-bottom:1px solid #404040;box-shadow:inset -1px -1px 0 #808080"></div>
<div class="a" style="left:943px;top:111px;width:16px;height:16px;background:#d4d0c8;border-top:1px solid #fff;border-left:1px solid #fff;border-right:1px solid #404040;border-bottom:1px solid #404040;box-shadow:inset -1px -1px 0 #808080"></div>
<svg class="a" style="left:907px;top:111px" width="16" height="16" viewBox="0 0 16 16"><rect x="4" y="9" width="6" height="2" fill="#000"/></svg>
<svg class="a" style="left:925px;top:111px" width="16" height="16" viewBox="0 0 16 16"><rect x="3.5" y="2.5" width="8" height="8" fill="none" stroke="#000" stroke-width="1"/><rect x="3" y="2" width="9" height="2" fill="#000"/></svg>
<svg class="a" style="left:943px;top:111px" width="16" height="16" viewBox="0 0 16 16"><path d="M4 3.5 L11 10.5 M11 3.5 L4 10.5" stroke="#000" stroke-width="1.6"/></svg>
<div class="a" style="left:142px;top:128px;width:817px;height:4px;background:#d4d4d6"></div>
<div class="a" style="left:143px;top:134px;width:62px;height:22px;background:#d6d2cb"></div>
<svg class="a" style="left:143px;top:134px" width="62" height="22" viewBox="0 0 62 22"><path d="M0 22 L0 3 Q0 0 3 0 L59 0 Q62 0 62 3 L62 22 L61.2 22 L58.5 3.5 L2.5 3.5 L1 22 Z" fill="#8a8a8a"/></svg>
<div class="t" style="left:152px;top:141px;font-size:11px;color:#000">信息操作</div>
<div class="a" style="left:207px;top:134px;width:62px;height:21px;background:#e4e2dc;border-radius:2px 2px 0 0"></div>
<div class="a" style="left:207px;top:137px;width:62px;height:18px;background:#cbc7c0;clip-path:polygon(2px 0,58px 0,61px 18px,1px 18px)"></div>
<div class="t" style="left:216px;top:141px;font-size:11px;color:#444">使用指南</div>
<div class="a" style="left:205px;top:155px;width:750px;height:1px;background:#f0eee8"></div>
<div class="a" style="left:954px;top:155px;width:1px;height:349px;background:#a8a49c"></div>
<div class="a" style="left:169px;top:181px;width:755px;height:250px;border:1px solid #b2aea6"></div>
<div class="t" style="left:485px;top:208px;font-size:20px;color:#000">保&ensp;单&ensp;登&ensp;记</div>
<div class="lbl" style="left:210px;top:255px">保&ensp;单&ensp;号</div>
<div class="a" style="left:271px;top:252px;width:249px;height:19px;background:#fff;border-top:1px solid #dedcd6;border-left:1px solid #dedcd6"></div>
<div class="t" style="left:275px;top:255px;font-size:12.5px;color:#000">100001</div>
<div class="lbl" style="left:550px;top:255px">批&ensp;单&ensp;号</div>
<div class="a" style="left:611px;top:252px;width:269px;height:19px;background:#fff;border-top:1px solid #dedcd6;border-left:1px solid #dedcd6"></div>
<div class="t" style="left:615px;top:255px;font-size:12.5px;color:#000">200001</div>
<div class="lbl" style="left:210px;top:297px">产品名称</div>
<div class="a" style="left:271px;top:293px;width:250px;height:21px;background:#fff;border-top:1px solid #c4c0b8;border-left:1px solid #dedcd6;border-bottom:1px solid #ecebe6"></div>
<div class="a" style="left:504px;top:293px;width:17px;height:21px;background:#d4d0c8;border-top:1px solid #fff;border-left:1px solid #fff;border-right:1px solid #686868;border-bottom:1px solid #686868;box-shadow:inset -1px -1px 0 #a0a0a0"></div>
<svg class="a" style="left:504px;top:293px" width="17" height="21" viewBox="0 0 17 21"><path d="M4.5 10.0 h8 l-4 4 Z" fill="#000"/></svg>
<div class="t" style="left:275px;top:296px;font-size:14px;color:#000">商业保单</div>
<div class="lbl" style="left:550px;top:297px">代理名称</div>
<div class="a" style="left:611px;top:293px;width:270px;height:21px;background:#fff;border-top:1px solid #c4c0b8;border-left:1px solid #dedcd6;border-bottom:1px solid #ecebe6"></div>
<div class="a" style="left:864px;top:293px;width:17px;height:21px;background:#d4d0c8;border-top:1px solid #fff;border-left:1px solid #fff;border-right:1px solid #686868;border-bottom:1px solid #686868;box-shadow:inset -1px -1px 0 #a0a0a0"></div>
<svg class="a" style="left:864px;top:293px" width="17" height="21" viewBox="0 0 17 21"><path d="M4.5 10.0 h8 l-4 4 Z" fill="#000"/></svg>
<div class="t" style="left:629px;top:296px;font-size:14px;color:#000">保险公司</div>
<svg class="a" style="left:616px;top:297px" width="11" height="11" viewBox="0 0 11 11"><path d="M1 1 L10 10 M10 1 L1 10" stroke="#000" stroke-width="1"/></svg>
<div class="lbl" style="left:210px;top:339px">签单日期</div>
<div class="a" style="left:271px;top:335px;width:250px;height:21px;background:#fff;border-top:1px solid #c4c0b8;border-left:1px solid #dedcd6;border-bottom:1px solid #ecebe6"></div>
<div class="a" style="left:504px;top:335px;width:17px;height:21px;background:#d4d0c8;border-top:1px solid #fff;border-left:1px solid #fff;border-right:1px solid #686868;border-bottom:1px solid #686868;box-shadow:inset -1px -1px 0 #a0a0a0"></div>
<svg class="a" style="left:504px;top:335px" width="17" height="21" viewBox="0 0 17 21"><path d="M4.5 10.0 h8 l-4 4 Z" fill="#000"/></svg>
<div class="t" style="left:275px;top:339px;font-size:12.5px;color:#000">2016–09–23</div>
<div class="lbl" style="left:550px;top:339px">被保险人</div>
<div class="a" style="left:611px;top:336px;width:269px;height:19px;background:#fff;border-top:1px solid #dedcd6;border-left:1px solid #dedcd6"></div>
<div class="t" style="left:615px;top:338px;font-size:14px;color:#000">王先生</div>
<div class="lbl" style="left:210px;top:382px">签单保费</div>
<div class="a" style="left:271px;top:378px;width:119px;height:19px;background:#fff;border-top:1px solid #dedcd6;border-left:1px solid #dedcd6"></div>
<div class="t" style="right:711px;top:381px;font-family:'Liberation Mono',monospace;font-size:14px;color:#000;transform:scaleX(0.8);transform-origin:100% 0">3625</div>
<div class="lbl" style="left:415px;top:382px">比例</div>
<div class="a" style="left:447px;top:378px;width:73px;height:19px;background:#fff;border-top:1px solid #dedcd6;border-left:1px solid #dedcd6"></div>
<div class="t" style="right:581px;top:381px;font-family:'Liberation Mono',monospace;font-size:14px;color:#000;transform:scaleX(0.8);transform-origin:100% 0">0.04</div>
<div class="lbl" style="left:550px;top:382px">手&ensp;续&ensp;费</div>
<div class="a" style="left:611px;top:378px;width:100px;height:19px;background:#80ffff;border-top:1px solid #c0d8d8;border-left:1px solid #c0d8d8"></div>
<div class="t" style="right:391px;top:381px;font-family:'Liberation Mono',monospace;font-size:14px;color:#000;transform:scaleX(0.8);transform-origin:100% 0">145</div>
<div class="lbl" style="left:725px;top:383px">代理人</div>
<div class="a" style="left:772px;top:379px;width:110px;height:21px;background:#fff;border-top:1px solid #c4c0b8;border-left:1px solid #dedcd6;border-bottom:1px solid #ecebe6"></div>
<div class="a" style="left:864px;top:379px;width:18px;height:21px;background:#d4d0c8;border-top:1px solid #fff;border-left:1px solid #fff;border-right:1px solid #686868;border-bottom:1px solid #686868;box-shadow:inset -1px -1px 0 #a0a0a0"></div>
<svg class="a" style="left:864px;top:379px" width="18" height="21" viewBox="0 0 18 21"><path d="M5.0 10.0 h8 l-4 4 Z" fill="#000"/></svg>
<div class="t" style="left:776px;top:382px;font-size:14px;color:#000">小李</div>
<div class="a" style="left:317px;top:465px;width:51px;height:36px;background:#d6d2cb;border-top:1px solid #f2f0ea;border-left:1px solid #f2f0ea;border-right:1px solid #8c8a84;border-bottom:2px solid #8c8a84;"></div>
<div class="t" style="left:331px;top:478px;color:#444">增加</div>
<div class="a" style="left:372px;top:465px;width:33px;height:36px;background:#d6d2cb;border-top:1px solid #f2f0ea;border-left:1px solid #f2f0ea;border-right:1px solid #8c8a84;border-bottom:2px solid #8c8a84;"></div>
<div class="a" style="left:406px;top:465px;width:32px;height:36px;background:#d6d2cb;border-top:1px solid #f2f0ea;border-left:1px solid #f2f0ea;border-right:1px solid #8c8a84;border-bottom:2px solid #8c8a84;"></div>
<div class="a" style="left:439px;top:465px;width:32px;height:36px;background:#d6d2cb;border-top:1px solid #f2f0ea;border-left:1px solid #f2f0ea;border-right:1px solid #8c8a84;border-bottom:2px solid #8c8a84;"></div>
<div class="a" style="left:472px;top:465px;width:32px;height:36px;background:#d6d2cb;border-top:1px solid #f2f0ea;border-left:1px solid #f2f0ea;border-right:1px solid #8c8a84;border-bottom:2px solid #8c8a84;"></div>
<div class="a" style="left:505px;top:465px;width:32px;height:36px;background:#d6d2cb;border-top:1px solid #f2f0ea;border-left:1px solid #f2f0ea;border-right:1px solid #8c8a84;border-bottom:2px solid #8c8a84;"></div>
<div class="a" style="left:538px;top:465px;width:32px;height:36px;background:#d6d2cb;border-top:1px solid #f2f0ea;border-left:1px solid #f2f0ea;border-right:1px solid #8c8a84;border-bottom:2px solid #8c8a84;"></div>
<div class="a" style="left:571px;top:465px;width:32px;height:36px;background:#d6d2cb;border-top:1px solid #f2f0ea;border-left:1px solid #f2f0ea;border-right:1px solid #8c8a84;border-bottom:2px solid #8c8a84;"></div>
<div class="a" style="left:604px;top:465px;width:32px;height:36px;background:#d6d2cb;border-top:1px solid #f2f0ea;border-left:1px solid #f2f0ea;border-right:1px solid #8c8a84;border-bottom:2px solid #8c8a84;"></div>
<svg class="a" style="left:383px;top:479px" width="12" height="10" viewBox="0 0 12 10"><defs><linearGradient id="bl" x1="0" y1="0" x2="0" y2="1"><stop offset="0" stop-color="#3c8cf4"/><stop offset="1" stop-color="#0a52d0"/></linearGradient></defs><rect x="0" y="0" width="2" height="9.5" fill="#0a5ad8"/><path d="M11 0 L2.6 4.75 L11 9.5 L9.8 4.75 Z" fill="url(#bl)"/></svg>
<svg class="a" style="left:417px;top:479px" width="12" height="10" viewBox="0 0 12 10"><path d="M9 0 L1 4.75 L9 9.5 L8 4.75 Z" fill="url(#bl)"/></svg>
<svg class="a" style="left:450px;top:479px" width="12" height="10" viewBox="0 0 12 10"><path d="M2 0 L10 4.75 L2 9.5 L3 4.75 Z" fill="url(#bl)"/></svg>
<svg class="a" style="left:483px;top:479px" width="12" height="10" viewBox="0 0 12 10"><path d="M0 0 L8.4 4.75 L0 9.5 L1.2 4.75 Z" fill="url(#bl)"/><rect x="9" y="0" width="2" height="9.5" fill="#0a5ad8"/></svg>
<svg class="a" style="left:516px;top:479px" width="12" height="10" viewBox="0 0 12 10"><rect x="0" y="3" width="10" height="3" fill="#e83808"/><rect x="0" y="3" width="10" height="1" fill="#ff9030"/></svg>
<svg class="a" style="left:549px;top:479px" width="12" height="10" viewBox="0 0 12 10"><path d="M0 7 L5 2 L10 7 Z" fill="#20a8c0"/></svg>
<svg class="a" style="left:582px;top:479px" width="12" height="10" viewBox="0 0 12 10"><path d="M0.5 4.5 L3.5 8 L10 1" stroke="#60a070" stroke-width="1.8" fill="none"/></svg>
<svg class="a" style="left:615px;top:479px" width="12" height="10" viewBox="0 0 12 10"><path d="M1 1 L9 9 M9 1 L1 9" stroke="#e07070" stroke-width="1.6"/></svg>
<div class="a" style="left:641px;top:465px;width:33px;height:36px;background:#d6d2cb;border-top:1px solid #f2f0ea;border-left:1px solid #f2f0ea;border-right:1px solid #8c8a84;border-bottom:2px solid #8c8a84;"></div>
<div class="a" style="left:678px;top:465px;width:33px;height:36px;background:#d6d2cb;border-top:1px solid #f2f0ea;border-left:1px solid #f2f0ea;border-right:1px solid #8c8a84;border-bottom:2px solid #8c8a84;"></div>
<div class="a" style="left:715px;top:465px;width:33px;height:36px;background:#d6d2cb;border-top:1px solid #f2f0ea;border-left:1px solid #f2f0ea;border-right:1px solid #8c8a84;border-bottom:2px solid #8c8a84;"></div>
<svg class="a" style="left:650px;top:474px" width="17" height="17" viewBox="0 0 17 17"><path d="M3.5 1 V7.5 M3.5 1 H9 L11.5 3.5 V7.5" fill="#fafafa" stroke="#000" stroke-width="1"/><path d="M3.5 1 H9 L11.5 3.5 V7.5 H3.5 Z" fill="#fafafa"/><path d="M3 1 V7.5" stroke="#000" stroke-width="1"/><path d="M9 1 V3.5 H11.5" fill="none" stroke="#000" stroke-width="0.9"/><rect x="5" y="3" width="1.5" height="1" fill="#000"/><rect x="5" y="5" width="4" height="1" fill="#000"/><rect x="0.5" y="8" width="15" height="8" rx="1" fill="#e4e4e4" stroke="#000" stroke-width="1"/><rect x="2" y="10.2" width="12" height="0.8" fill="#b0b0b0"/><rect x="1" y="12.3" width="14" height="1" fill="#000"/><rect x="12.6" y="10" width="1.4" height="1.2" fill="#f00"/></svg>
<svg class="a" style="left:686px;top:474px" width="18" height="18" viewBox="0 0 18 18"><defs><radialGradient id="lens" cx="0.4" cy="0.35" r="0.7"><stop offset="0" stop-color="#d8f0ff"/><stop offset="1" stop-color="#3a9af0"/></radialGradient></defs><rect x="1" y="1" width="14" height="1" fill="#000"/><rect x="14" y="1" width="1" height="3" fill="#000"/><rect x="1.3" y="3.5" width="2.8" height="8" fill="#40a8f0"/><rect x="1.3" y="3.5" width="2.8" height="1" fill="#a0a0a0"/><rect x="1" y="12.5" width="5" height="1" fill="#000"/><circle cx="10" cy="9.5" r="4.4" fill="url(#lens)" stroke="#000" stroke-width="1.1"/><path d="M13.3 13 L16 15.8" stroke="#000" stroke-width="2.4"/><path d="M13.6 13.3 L15.8 15.6" stroke="#30a0f0" stroke-width="1.2"/></svg>
<svg class="a" style="left:726px;top:475px" width="12" height="16" viewBox="0 0 12 16"><path d="M1 0.8 L11 7.5 L1 14.2 Z" fill="#60d860" stroke="#606060" stroke-width="1"/></svg>
<div class="a" style="left:143px;top:504px;width:812px;height:1px;background:#aaa69e"></div>
</body></html>
